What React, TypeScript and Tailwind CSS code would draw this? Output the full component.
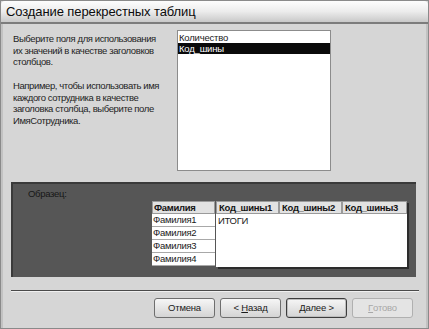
import React from "react";

const font = { fontFamily: '"Liberation Sans", Arial, sans-serif' };

function Btn({ children, def, disabled }: { children: React.ReactNode; def?: boolean; disabled?: boolean }) {
  return (
    <div
      className={
        "w-[61px] h-[20px] flex items-center justify-center rounded-[3px] text-[9.5px] tracking-[-0.2px] leading-none " +
        (disabled
          ? "border border-[#b0b0b0] bg-[#e4e4e4] text-[#a8a8a8]"
          : def
          ? "border border-[#3c3c3c] bg-gradient-to-b from-[#f6f6f6] to-[#d4d4d4] text-[#1a1a1a] shadow-[inset_0_0_0_1px_#bdbdbd]"
          : "border border-[#6e6e6e] bg-gradient-to-b from-[#f6f6f6] to-[#d4d4d4] text-[#1a1a1a]")
      }
    >
      {children}
    </div>
  );
}

export default function App() {
  return (
    <div className="w-[429px] h-[329px] bg-[#d6d6d6] border border-[#8a8a8a] flex flex-col overflow-hidden" style={font}>
      {/* title bar */}
      <div className="h-[23px] shrink-0 bg-gradient-to-b from-[#fdfdfd] via-[#ececec] to-[#c9c9c9] border-b-2 border-[#7c7c7c] flex items-center pl-[5px] rounded-t-[4px]">
        <span className="text-[13px] text-[#0c0c0c] tracking-[-0.1px]">
          Создание перекрестных таблиц
        </span>
      </div>
      <div className="flex-1 flex flex-col border-l-2 border-r-2 border-[#c2c2c2] px-[8px]">
        {/* top section */}
        <div className="flex pt-[6px]">
          <div className="w-[166px] pl-[2px] pt-[3px] text-[9.5px] tracking-[-0.4px] leading-[11.7px] text-[#1e1e1e]">
            <p>Выберите поля для использования</p>
            <p>их значений в качестве заголовков</p>
            <p>столбцов.</p>
            <p className="mt-[11.7px]">Например, чтобы использовать имя</p>
            <p>каждого сотрудника в качестве</p>
            <p>заголовка столбца, выберите поле</p>
            <p>ИмяСотрудника.</p>
          </div>
          <div className="w-[154px] h-[141px] bg-white border border-[#8c8c8c] text-[9.5px] tracking-[-0.2px] leading-[11px] pt-[1px]">
            <div className="h-[11px] pl-[1px] text-[#1a1a1a]">Количество</div>
            <div className="h-[11px] pl-[1px] bg-[#0a0a0a] text-white">Код_шины</div>
          </div>
        </div>
        {/* sample panel */}
        <div className="mt-[11px] w-[405px] h-[95px] bg-[#565656] border-t-2 border-l-2 border-[#3a3a3a] relative">
          <div className="absolute left-[15px] top-[3px] text-[9.5px] tracking-[-0.3px] text-[#161616]">Образец:</div>
          <div className="flex pl-[139px] pt-[17px]">
            <div className="w-[63px] flex flex-col">
              <div className="h-[13px] bg-[#e2e2e2] border border-[#9a9a9a] text-[9.5px] tracking-[-0.3px] font-bold leading-[11px] pl-[1px] text-[#141414]">Фамилия</div>
              {["Фамилия1", "Фамилия2", "Фамилия3", "Фамилия4"].map((t) => (
                <div key={t} className="h-[13px] bg-white border-b border-[#a8a8a8] text-[9.5px] tracking-[-0.3px] leading-[12px] pl-[1px] text-[#1a1a1a]">
                  {t}
                </div>
              ))}
            </div>
            <div className="ml-[1px] w-[191px] flex flex-col shadow-[2px_2px_0_#2c2c2c]">
              <div className="flex h-[13px]">
                {["Код_шины1", "Код_шины2", "Код_шины3"].map((t, i) => (
                  <div
                    key={t}
                    className={
                      "h-[13px] bg-[#e2e2e2] border border-[#9a9a9a] text-[9.5px] tracking-[-0.3px] font-bold leading-[11px] pl-[2px] text-[#141414] whitespace-nowrap overflow-hidden " +
                      (i === 2 ? "w-[65px]" : "w-[63px]")
                    }
                  >
                    {t}
                  </div>
                ))}
              </div>
              <div className="h-[53px] bg-white text-[9.5px] tracking-[-0.3px] leading-[12px] pl-[2px] pt-[1px] text-[#1a1a1a]">ИТОГИ</div>
            </div>
          </div>
        </div>
        {/* separator */}
        <div className="mt-[13px] w-[408px] h-[2px] border-t border-[#4a4a4a] border-b border-b-[#f0f0f0]" />
        {/* buttons */}
        <div className="mt-[6px] flex justify-end gap-[5px] pr-[5px]">
          <Btn>Отмена</Btn>
          <Btn>
            &lt;&nbsp;<span className="underline">Н</span>азад
          </Btn>
          <Btn def>
            <span className="underline">Д</span>алее &gt;
          </Btn>
          <Btn disabled>
            <span className="underline">Г</span>отово
          </Btn>
        </div>
      </div>
    </div>
  );
}
